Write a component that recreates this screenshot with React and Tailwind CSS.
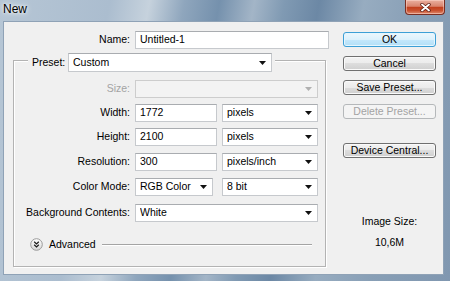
import clsx from 'clsx';

const Label = ({ children, width, disabled }) => (
    <span
        className={clsx('shrink-0 pr-[5px] text-right', disabled ? 'text-[#a3a3a3]' : 'text-black')}
        style={{ width }}
    >
        {children}
    </span>
);

const Input = ({ value, className }) => (
    <div
        className={clsx(
            'flex h-[18px] items-center border border-[#c6c9cd] border-t-[#a9acb0] bg-white pl-[4px] text-black',
            className
        )}
    >
        {value}
    </div>
);

const Select = ({ value, className, disabled }) => (
    <div
        className={clsx(
            'flex h-[18px] items-center border pl-[4px] pr-[5px]',
            disabled ? 'border-[#cdcdcd] bg-[#f3f3f3]' : 'border-[#c6c9cd] border-t-[#a9acb0] bg-white text-black',
            className
        )}
    >
        <span className="flex-1 truncate">{value}</span>
        <svg width="7" height="4" viewBox="0 0 7 4">
            <path d="M0 0h7L3.5 4z" fill={disabled ? '#b0b0b0' : '#111'} />
        </svg>
    </div>
);

const Button = ({ children, variant, className }) => (
    <div
        className={clsx(
            'flex h-[15px] w-[93px] items-center justify-center rounded-[3px] border leading-none',
            variant === 'default' &&
                'border-[#3c9fd6] bg-[linear-gradient(to_bottom,#ecf7fd_0%,#dcf1fc_50%,#c5e8fb_50%,#b2dff7_100%)] text-black shadow-[inset_0_0_0_1px_#e6f6fe]',
            variant === 'disabled' && 'border-[#b5b8ba] bg-[#f4f4f4] text-[#a3a3a3]',
            !variant &&
                'border-[#707070] bg-[linear-gradient(to_bottom,#f3f3f3_0%,#ebebeb_50%,#dddddd_50%,#cfcfcf_100%)] text-black shadow-[inset_0_0_0_1px_#fafafa]',
            className
        )}
    >
        {children}
    </div>
);

const AdvancedIcon = () => (
    <svg width="13" height="13" viewBox="0 0 13 13">
        <defs>
            <linearGradient id="adv" x1="0" y1="0" x2="0" y2="1">
                <stop offset="0" stopColor="#ffffff" />
                <stop offset="1" stopColor="#d8d8d8" />
            </linearGradient>
        </defs>
        <circle cx="6.5" cy="6.5" r="5.8" fill="url(#adv)" stroke="#9a9a9a" strokeWidth="1" />
        <path d="M4.2 3.8 6.5 5.9 8.8 3.8M4.2 6.8 6.5 8.9 8.8 6.8" fill="none" stroke="#1a1a1a" strokeWidth="1.2" />
    </svg>
);

const App = () => {
    return (
        <div className="flex h-[281px] w-[450px] flex-col overflow-hidden bg-[linear-gradient(100deg,#b6c6d5_0%,#abbdcf_22%,#c6d2dd_30%,#8fa6bd_37%,#7591ad_44%,#a3b5c7_51%,#809ab3_57%,#6c88a5_64%,#97acc0_73%,#889fb6_84%,#8097b0_100%)] font-['Liberation_Sans',Arial,sans-serif] text-[10.5px]">
            <div className="flex h-[21px] shrink-0 items-start justify-between">
                <span className="pl-[3px] pt-[2px] text-[12px] leading-[14px] text-black [text-shadow:0_0_6px_#ffffff,0_0_3px_#ffffff]">
                    New
                </span>
                <div className="mr-[5px] flex h-[15px] w-[40px] items-center justify-center rounded-b-[4px] border border-t-0 border-[#7a2e22] bg-[linear-gradient(to_bottom,#eab0a0_0%,#d9846e_45%,#c2401f_52%,#c9512f_75%,#df8c70_100%)] shadow-[inset_0_0_0_1px_rgba(255,220,210,0.5)]">
                    <svg width="11" height="9" viewBox="0 0 11 9">
                        <path d="M2 1.5 9 7.5M9 1.5 2 7.5" stroke="#5a1a10" strokeWidth="3.4" strokeLinecap="round" />
                        <path d="M2 1.5 9 7.5M9 1.5 2 7.5" stroke="#ffffff" strokeWidth="1.9" strokeLinecap="round" />
                    </svg>
                </div>
            </div>

            <div className="ml-[3px] flex h-[254px] w-[441px] shrink-0 border border-[#8fa2b6] bg-[#f0f0f0]">
                <div className="flex w-[339px] shrink-0 flex-col">
                    <div className="mt-[9px] flex h-[18px] items-center">
                        <Label width={131}>Name:</Label>
                        <Input value="Untitled-1" className="w-[194px]" />
                    </div>

                    {/* Preset group box */}
                    <div className="ml-[9px] mt-[11px] flex w-[313px] flex-col border border-[#b3b3b3] pb-[15px] shadow-[inset_1px_1px_0_#ffffff,1px_1px_0_#ffffff]">
                        <div className="-mt-[8px] ml-[14px] flex w-fit items-center bg-[#f0f0f0] pl-[4px] pr-[3px]">
                            <span className="w-[36px] text-black">Preset:</span>
                            <Select value="Custom" className="h-[19px] w-[204px]" />
                        </div>

                        <div className="mt-[8px] flex h-[18px] items-center">
                            <Label width={121} disabled>
                                Size:
                            </Label>
                            <Select value="" disabled className="w-[183px]" />
                        </div>
                        <div className="mt-[6px] flex h-[18px] items-center">
                            <Label width={121}>Width:</Label>
                            <Input value="1772" className="w-[82px]" />
                            <Select value="pixels" className="ml-[5px] w-[96px]" />
                        </div>
                        <div className="mt-[6px] flex h-[18px] items-center">
                            <Label width={121}>Height:</Label>
                            <Input value="2100" className="w-[82px]" />
                            <Select value="pixels" className="ml-[5px] w-[96px]" />
                        </div>
                        <div className="mt-[7px] flex h-[18px] items-center">
                            <Label width={121}>Resolution:</Label>
                            <Input value="300" className="w-[82px]" />
                            <Select value="pixels/inch" className="ml-[5px] w-[96px]" />
                        </div>
                        <div className="mt-[7px] flex h-[18px] items-center">
                            <Label width={121}>Color Mode:</Label>
                            <Select value="RGB Color" className="w-[78px]" />
                            <Select value="8 bit" className="ml-[9px] w-[96px]" />
                        </div>
                        <div className="mt-[8px] flex h-[18px] items-center">
                            <Label width={121}>Background Contents:</Label>
                            <Select value="White" className="w-[183px]" />
                        </div>

                        <div className="mt-[16px] flex h-[13px] items-center pl-[16px] pr-[13px]">
                            <AdvancedIcon />
                            <span className="ml-[6px] text-black">Advanced</span>
                            <div className="ml-[6px] h-px flex-1 bg-[#a4a4a4] shadow-[0_1px_0_#ffffff]"></div>
                        </div>
                    </div>
                </div>

                <div className="flex w-[93px] shrink-0 flex-col">
                    <Button variant="default" className="mt-[10px]">
                        OK
                    </Button>
                    <Button className="mt-[9px]">Cancel</Button>
                    <Button className="mt-[9px]">Save Preset...</Button>
                    <Button variant="disabled" className="mt-[9px]">
                        Delete Preset...
                    </Button>
                    <Button className="mt-[24px]">Device Central...</Button>

                    <div className="mt-[57px] text-center leading-[13px] text-black">Image Size:</div>
                    <div className="mt-[8px] text-center leading-[13px] text-black">10,6M</div>
                </div>
            </div>
        </div>
    );
};

export default App;
